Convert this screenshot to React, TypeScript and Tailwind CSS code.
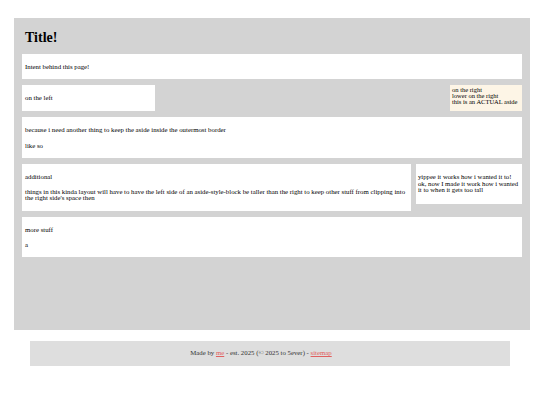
import React from "react";

export default function App() {
  return (
    <div className="w-[540px] h-[405px] bg-white overflow-hidden text-black" style={{ fontFamily: '"Liberation Serif", "Times New Roman", serif' }}>
      <div className="h-[18px]" />
      <main className="ml-[14px] w-[516px] h-[312px] bg-[#d3d3d3] px-[8px] pt-[12px] text-[6.8px] leading-[7.5px]">
        <h1 className="pl-[3px] text-[14px] leading-[16px] font-bold h-[24px]">Title!</h1>
        <div className="flex flex-col gap-[6px]">
          <section className="bg-white px-[3px] h-[25px] flex items-center">
            <p>Intent behind this page!</p>
          </section>
          <div className="flex justify-between">
            <section className="bg-white px-[3px] w-[133px] h-[26px] flex items-center">
              <p>on the left</p>
            </section>
            <aside className="bg-[#fdf5e6] w-[72px] h-[26px] px-[2px] pt-[2px] leading-[6px] text-[6.5px]">
              on the right
              <br />
              lower on the right
              <br />
              this is an ACTUAL aside
            </aside>
          </div>
          <section className="bg-white px-[3px] h-[41px] flex flex-col justify-center gap-[8px]">
            <p>because i need another thing to keep the aside inside the outermost border</p>
            <p>like so</p>
          </section>
          <div className="flex gap-[5px] items-start">
            <section className="bg-white px-[3px] w-[389px] h-[47px] flex flex-col justify-center gap-[8px]">
              <p>additional</p>
              <p className="leading-[6.5px]">
                things in this kinda layout will have to have the left side of an aside-style-block be taller than the right to keep other stuff from clipping into the right side's space then
              </p>
            </section>
            <aside className="bg-white w-[106px] h-[40px] px-[2px] flex items-center text-[6.7px]">
              <p className="leading-[6.8px] whitespace-nowrap">
                yippee it works how i wanted it to!
                <br />
                ok, now I made it work how i wanted
                <br />
                it to when it gets too tall
              </p>
            </aside>
          </div>
          <section className="bg-white px-[3px] h-[40px] flex flex-col justify-center gap-[8px]">
            <p>more stuff</p>
            <p>a</p>
          </section>
        </div>
      </main>
      <footer className="mt-[11px] ml-[30px] w-[480px] h-[25px] bg-[#dedede] flex items-center justify-center pr-[18px] text-[6.8px] text-[#333]">
        <span>
          Made by <a className="text-[#e06060] underline">me</a> - est. 2025 (© 2025 to 5ever) - <a className="text-[#e06060] underline">sitemap</a>
        </span>
      </footer>
    </div>
  );
}
